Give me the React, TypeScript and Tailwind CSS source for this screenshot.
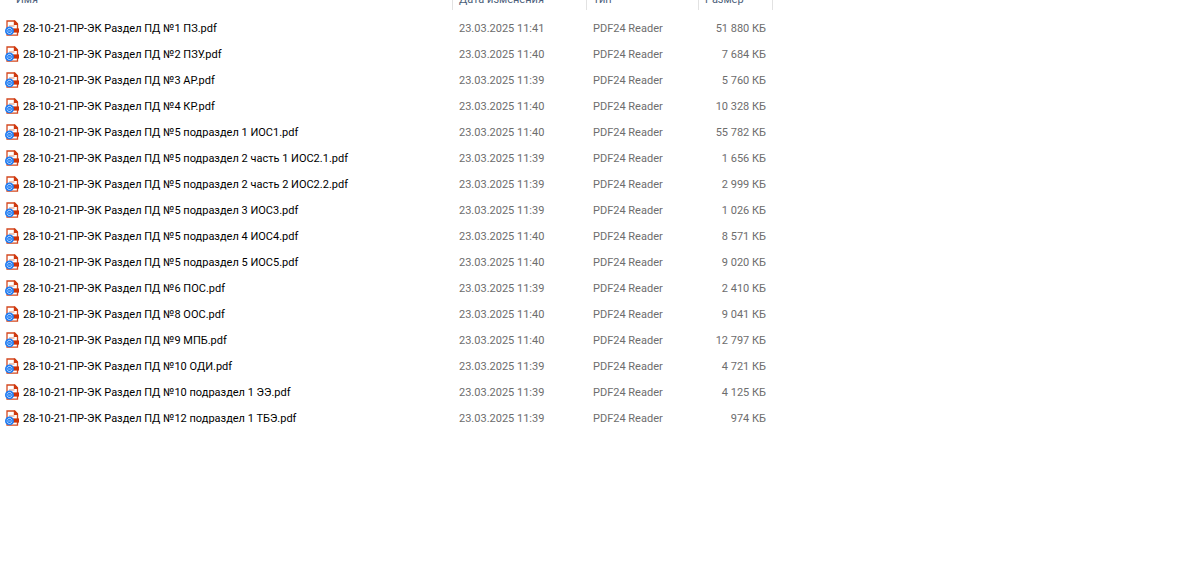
type FileRow = { name: string; date: string; size: string };

const PREFIX = "28-10-21-ПР-ЭК Раздел ПД ";

const files: FileRow[] = [
  { name: "№1 ПЗ.pdf", date: "23.03.2025 11:41", size: "51 880 КБ" },
  { name: "№2 ПЗУ.pdf", date: "23.03.2025 11:40", size: "7 684 КБ" },
  { name: "№3 АР.pdf", date: "23.03.2025 11:39", size: "5 760 КБ" },
  { name: "№4 КР.pdf", date: "23.03.2025 11:40", size: "10 328 КБ" },
  { name: "№5 подраздел 1 ИОС1.pdf", date: "23.03.2025 11:40", size: "55 782 КБ" },
  { name: "№5 подраздел 2 часть 1 ИОС2.1.pdf", date: "23.03.2025 11:39", size: "1 656 КБ" },
  { name: "№5 подраздел 2 часть 2 ИОС2.2.pdf", date: "23.03.2025 11:39", size: "2 999 КБ" },
  { name: "№5 подраздел 3 ИОС3.pdf", date: "23.03.2025 11:39", size: "1 026 КБ" },
  { name: "№5 подраздел 4 ИОС4.pdf", date: "23.03.2025 11:40", size: "8 571 КБ" },
  { name: "№5 подраздел 5 ИОС5.pdf", date: "23.03.2025 11:40", size: "9 020 КБ" },
  { name: "№6 ПОС.pdf", date: "23.03.2025 11:39", size: "2 410 КБ" },
  { name: "№8 ООС.pdf", date: "23.03.2025 11:40", size: "9 041 КБ" },
  { name: "№9 МПБ.pdf", date: "23.03.2025 11:40", size: "12 797 КБ" },
  { name: "№10 ОДИ.pdf", date: "23.03.2025 11:39", size: "4 721 КБ" },
  { name: "№10 подраздел 1 ЭЭ.pdf", date: "23.03.2025 11:39", size: "4 125 КБ" },
  { name: "№12 подраздел 1 ТБЭ.pdf", date: "23.03.2025 11:39", size: "974 КБ" },
];

function PdfIcon() {
  return (
    <svg className="-mt-0.5 h-4 w-3.5 shrink-0" viewBox="0 0 14 16" aria-hidden="true">
      <path d="M2 1h7.6l2.9 2.9v11.2H2z" fill="#fff" stroke="#d4481f" strokeWidth="1.3" />
      <path d="M8.8.5h1.2l3 3v1.4H8.8z" fill="#cf3a10" />
      <path d="M4 6h5.5" stroke="#e08a6f" strokeWidth="1" />
      <path d="M5 8.4h9v4.2H5z" fill="#cf3208" />
      <ellipse cx="4.5" cy="10.9" rx="4.5" ry="4.4" fill="#1f7cf2" />
      <path
        d="M2 10.4c.4-1.4 1.4-2 2.5-2s2.1.6 2.5 2M7 11.5c-.4 1.4-1.4 2-2.5 2s-2.1-.6-2.5-2"
        fill="none"
        stroke="#d6e8ff"
        strokeWidth=".9"
      />
      <path d="M2.8 11h3.4" stroke="#a9d0ff" strokeWidth=".8" />
    </svg>
  );
}

function HeaderCell({ label, first = false }: { label: string; first?: boolean }) {
  return (
    <th scope="col" className="p-0 pb-1.5 font-normal">
      <button
        type="button"
        className={`block h-5 w-full border-r border-[#e2e2e2] text-left leading-5 ${first ? "pl-4" : "pl-1.5"}`}
      >
        {label}
      </button>
    </th>
  );
}

export default function App() {
  return (
    <main className="min-h-screen overflow-hidden bg-white font-['Roboto','Noto_Sans',sans-serif] text-[11px] text-[#6d6d6d]">
      <table className="-mt-2.5 w-full table-fixed border-collapse whitespace-nowrap">
        <colgroup>
          <col className="w-[453px]" />
          <col className="w-[134px]" />
          <col className="w-[112px]" />
          <col className="w-[74px]" />
          <col />
        </colgroup>
        <thead className="text-[#4c607a]">
          <tr>
            <HeaderCell label="Имя" first />
            <HeaderCell label="Дата изменения" />
            <HeaderCell label="Тип" />
            <HeaderCell label="Размер" />
            <td />
          </tr>
        </thead>
        <tbody>
          {files.map((file) => (
            <tr key={file.name} className="h-[26px]">
              <td className="p-0 pl-[5px] text-black">
                <div className="flex items-center gap-1">
                  <PdfIcon />
                  <span>{PREFIX + file.name}</span>
                </div>
              </td>
              <td className="p-0 pl-1.5">{file.date}</td>
              <td className="p-0 pl-1.5">PDF24 Reader</td>
              <td className="p-0 pr-[7px] text-right">{file.size}</td>
              <td />
            </tr>
          ))}
        </tbody>
      </table>
    </main>
  );
}
